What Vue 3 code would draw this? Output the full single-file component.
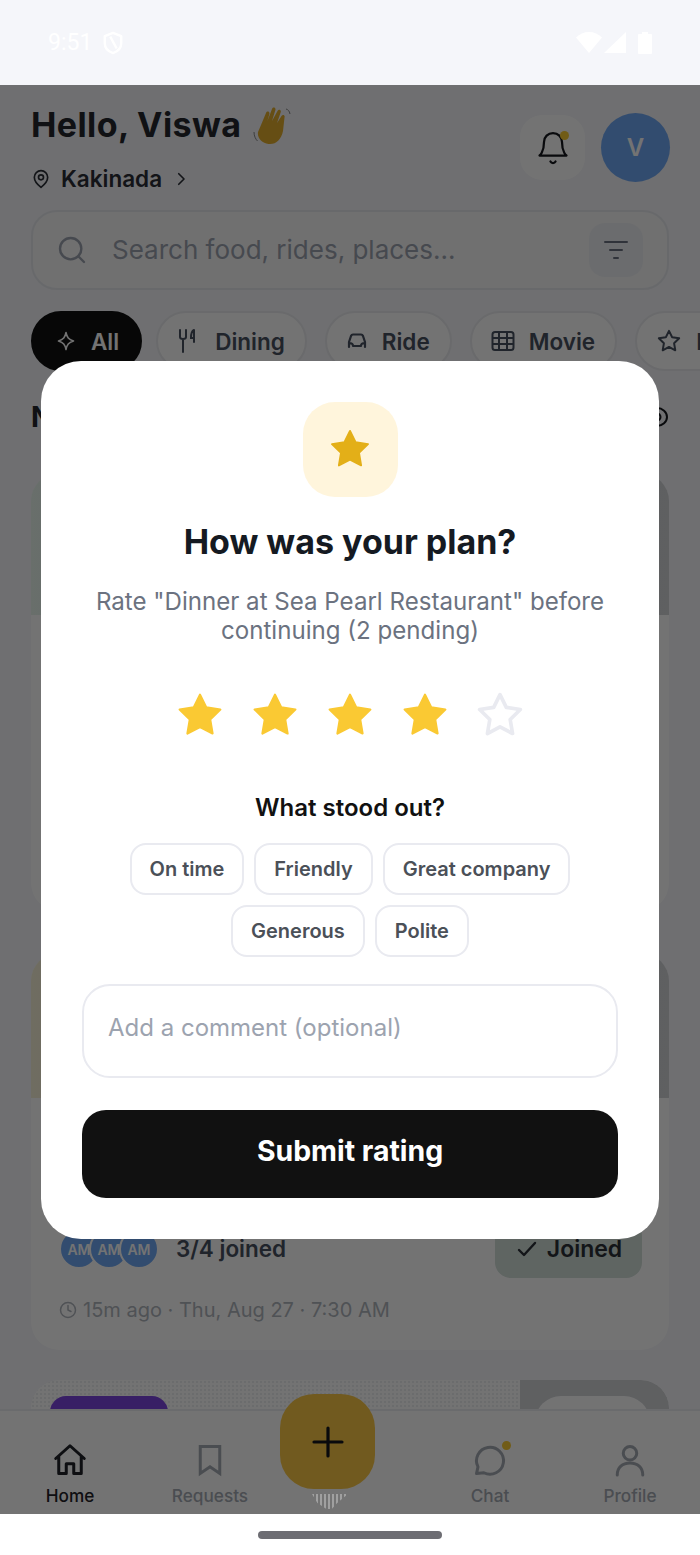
<script setup>
const star = 'M12 2.6l2.9 5.9 6.5.95-4.7 4.6 1.1 6.5L12 17.5l-5.8 3.05 1.1-6.5-4.7-4.6 6.5-.95z'
const chips = [
  { key: 'all', label: 'All', active: true },
  { key: 'dining', label: 'Dining' },
  { key: 'ride', label: 'Ride' },
  { key: 'movie', label: 'Movie' },
  { key: 'event', label: 'Events' }
]
const ratings = [true, true, true, true, false]
const tags = ['On time', 'Friendly', 'Great company', 'Generous', 'Polite']
</script>

<template>
  <div class="page">
    <div class="status">
      <div class="status-left">
        <span class="clock">9:51</span>
        <svg class="shield" viewBox="0 0 24 26" fill="none" stroke="#fff" stroke-width="2.6" stroke-linejoin="round">
          <path d="M12 2 3 5.5V13c0 5.5 3.8 9.3 9 11 5.200-1.700 9-5.500 9-11V5.500z" />
          <path d="M9 6l7 13" />
        </svg>
      </div>
      <div class="status-right">
        <svg width="26" height="21" viewBox="0 0 26 21" fill="#fff"><path d="M0 5.500C3.500 2 8 0 13 0s9.500 2 13 5.500L13 21z" /></svg>
        <svg width="22" height="21" viewBox="0 0 22 21" fill="#fff"><path d="M22 0v21H0z" /></svg>
        <svg class="battery" width="14" height="22" viewBox="0 0 14 22" fill="#fff"><path d="M4 0h6v2h3a1 1 0 0 1 1 1v18a1 1 0 0 1-1 1H1a1 1 0 0 1-1-1V3a1 1 0 0 1 1-1h3z" /></svg>
      </div>
    </div>

    <div class="screen">
      <div class="scroller">
        <header class="head">
          <div>
            <div class="hello">
              <h1>Hello, Viswa</h1>
              <svg class="wave" viewBox="0 0 38 38">
                <path fill="#e2ad2e" d="M8 18 13 6c1-2.400 4-1.400 3.400 1l-2 7 4.600-12c1-2.400 4-1.400 3.400 1L19 14l5.500-10c1.200-2.200 4-1 3.200 1.300L24 16l4.500-7c1.300-2 3.800-.8 3 1.400L30 24c-1.500 8.500-7.500 14-14.500 13C9 36 4 31 5 25z" />
                <path fill="none" stroke="#8a8a8a" stroke-width="1" d="M1 25c0 4 1.500 7 3.500 9M33 2c2 .5 3.500 2 4 5" />
              </svg>
            </div>
            <div class="place">
              <svg width="20" height="20" viewBox="0 0 24 24" fill="none" stroke="currentColor" stroke-width="2" stroke-linecap="round" stroke-linejoin="round"><path d="M20 10c0 6-8 12-8 12s-8-6-8-12a8 8 0 0 1 16 0Z" /><circle cx="12" cy="10" r="3" /></svg>
              <span>Kakinada</span>
              <svg class="chev" width="18" height="18" viewBox="0 0 24 24" fill="none" stroke="currentColor" stroke-width="2.200" stroke-linecap="round" stroke-linejoin="round"><path d="m9 5 7 7-7 7" /></svg>
            </div>
          </div>
          <div class="head-actions">
            <div class="bell">
              <svg width="36" height="36" viewBox="0 0 24 24" fill="none" stroke="#16181d" stroke-width="1.500" stroke-linecap="round" stroke-linejoin="round"><path d="M6 8a6 6 0 0 1 12 0c0 7 3 9 3 9H3s3-2 3-9" /><path d="M10.300 21a1.940 1.940 0 0 0 3.400 0" /></svg>
              <span class="dot bell-dot"></span>
            </div>
            <div class="avatar">V</div>
          </div>
        </header>

        <div class="search">
          <svg width="32" height="32" viewBox="0 0 24 24" fill="none" stroke="#9ca3af" stroke-width="1.800" stroke-linecap="round"><circle cx="11" cy="11" r="8" /><path d="m21 21-4.300-4.300" /></svg>
          <span class="search-text">Search food, rides, places...</span>
          <div class="filter">
            <svg width="28" height="28" viewBox="0 0 28 28" fill="none" stroke="#6b7280" stroke-width="2" stroke-linecap="round"><path d="M3 6h22M8 14h12M12 22h4" /></svg>
          </div>
        </div>

        <div class="chips">
          <div v-for="c in chips" :key="c.key" class="chip" :class="{ on: c.active }">
            <svg v-if="c.key === 'all'" width="20" height="20" viewBox="0 0 20 20" fill="none" stroke="currentColor" stroke-width="1.600" stroke-linejoin="round"><path d="M10 1.500c1 5 2.500 7 7.500 8.500-5 1.500-6.500 3.500-7.500 8.500-1-5-2.500-7-7.500-8.500 5-1.500 6.500-3.500 7.500-8.500z" /></svg>
            <svg v-else-if="c.key === 'dining'" width="24" height="26" viewBox="0 0 24 26" fill="none" stroke="currentColor" stroke-width="2" stroke-linecap="round"><path d="M3 2v7c0 1.500 1 2 3 2s3-.5 3-2V2M6 11v13M17 2v12M17 2c-2.500 1-3 4-3 8h3" /></svg>
            <svg v-else-if="c.key === 'ride'" width="22" height="20" viewBox="0 0 22 20" fill="none" stroke="currentColor" stroke-width="2.200" stroke-linecap="round" stroke-linejoin="round"><path d="M3 15V11l2-6c.4-1 1-1.500 2-1.500h8c1 0 1.600.5 2 1.500l2 6v4M3 12c2 0 4 1 4 3h8c0-2 2-3 4-3M3 15v1M19 15v1" /></svg>
            <svg v-else-if="c.key === 'movie'" width="24" height="22" viewBox="0 0 24 22" fill="none" stroke="currentColor" stroke-width="2" stroke-linejoin="round"><rect x="1.500" y="2" width="21" height="18" rx="2.500" /><path d="M8 2v18M16 2v18M1.500 8h21M1.500 14h21" /></svg>
            <svg v-else width="26" height="26" viewBox="0 0 24 24" fill="none" stroke="currentColor" stroke-width="1.800" stroke-linejoin="round"><path :d="star" /></svg>
            <span class="chip-label">{{ c.label }}</span>
          </div>
        </div>

        <div class="section">
          <h2>Nearby plans</h2>
          <svg width="24" height="24" viewBox="0 0 24 24" fill="none" stroke="#16181d" stroke-width="2"><ellipse cx="12" cy="12" rx="10" ry="9" /><circle cx="12" cy="12" r="3.500" /></svg>
        </div>

        <article class="card first">
          <div class="banner green"></div>
          <div class="card-body"></div>
        </article>

        <article class="card second">
          <div class="banner sand"></div>
          <div class="card-body">
            <div class="join-row">
              <div class="people">
                <span class="am">AM</span><span class="am">AM</span><span class="am">AM</span>
              </div>
              <span class="joined-count">3/4 joined</span>
              <div class="joined">
                <svg width="24" height="24" viewBox="0 0 24 24" fill="none" stroke="#2a2f37" stroke-width="2.400" stroke-linecap="round" stroke-linejoin="round"><path d="M4 13l5 5L20 6" /></svg>
                <span>Joined</span>
              </div>
            </div>
            <div class="when">
              <svg width="18" height="18" viewBox="0 0 24 24" fill="none" stroke="currentColor" stroke-width="2" stroke-linecap="round" stroke-linejoin="round"><circle cx="12" cy="12" r="10" /><path d="M12 6v6l4 2" /></svg>
              <span>15m ago · Thu, Aug 27 · 7:30 AM</span>
            </div>
          </div>
        </article>

        <article class="card third">
          <div class="banner dotted">
            <span class="badge"></span>
            <div class="frame"><span class="frame-pill"></span></div>
          </div>
        </article>
      </div>

      <nav class="nav">
        <div class="tab current">
          <svg width="40" height="38" viewBox="0 0 24 24" fill="none" stroke="currentColor" stroke-width="2" stroke-linecap="round" stroke-linejoin="round"><path d="M2.500 11 12 2.500 21.500 11M4.500 9.500V21h5v-6.500h5V21h5V9.500" /></svg>
          <span>Home</span>
        </div>
        <div class="tab">
          <svg width="38" height="38" viewBox="0 0 24 24" fill="none" stroke="currentColor" stroke-width="2" stroke-linejoin="miter"><path d="M5.500 3h13v18L12 16.500 5.500 21z" /></svg>
          <span>Requests</span>
        </div>
        <div class="fab-slot"></div>
        <div class="tab">
          <svg width="38" height="38" viewBox="0 0 24 24" fill="none" stroke="currentColor" stroke-width="2" stroke-linecap="round" stroke-linejoin="round"><path d="M7.900 20.500A9 9 0 1 0 4 16.600L3 21z" /></svg>
          <span class="dot chat-dot"></span>
          <span>Chat</span>
        </div>
        <div class="tab">
          <svg width="38" height="38" viewBox="0 0 24 24" fill="none" stroke="currentColor" stroke-width="2" stroke-linecap="round"><circle cx="12" cy="7.500" r="4.500" /><path d="M3.500 22c0-5 3.500-8 8.500-8s8.500 3 8.500 8" /></svg>
          <span>Profile</span>
        </div>
      </nav>

      <div class="fab">
        <svg width="36" height="36" viewBox="0 0 36 36" fill="none" stroke="#16181d" stroke-width="3.200" stroke-linecap="round"><path d="M18 4v28M4 18h28" /></svg>
      </div>

      <div class="overlay">
        <section class="modal">
          <div class="modal-icon">
            <svg width="46" height="46" viewBox="0 0 24 24" fill="#e3af18" stroke="#e3af18" stroke-width="1" stroke-linejoin="round"><path :d="star" /></svg>
          </div>
          <h3 class="title">How was your plan?</h3>
          <p class="sub">Rate "Dinner at Sea Pearl Restaurant" before<br />continuing (2 pending)</p>
          <div class="rating">
            <svg v-for="(full, i) in ratings" :key="i" width="52" height="52" viewBox="0 0 24 24" :fill="full ? '#fac933' : 'none'" :stroke="full ? '#fac933' : '#e9eaf0'" :stroke-width="full ? 1 : 1.700" stroke-linejoin="round"><path :d="star" /></svg>
          </div>
          <div class="stood">What stood out?</div>
          <div class="tags">
            <span v-for="t in tags" :key="t" class="tag">{{ t }}</span>
          </div>
          <div class="comment">Add a comment (optional)</div>
          <button class="submit" type="button">Submit rating</button>
        </section>
        <span class="ghost"></span>
      </div>
    </div>

    <div class="gesture"><span class="pill"></span></div>
  </div>
</template>

<style>
html, body { margin: 0; padding: 0; }
</style>

<style scoped>
* { box-sizing: border-box; }
.page {
  width: 700px; height: 1555px; display: flex; flex-direction: column;
  overflow: hidden; background: #fff; font-family: Inter, "Liberation Sans", sans-serif;
}
h1, h2, h3, p { margin: 0; }
.status {
  height: 85px; flex: none; background: #f5f6fa; display: flex; align-items: center;
  justify-content: space-between; padding: 0 48px;
}
.status-left { display: flex; align-items: center; gap: 10px; }
.clock { font: 400 23px/1 Roboto, sans-serif; color: #fff; }
.shield { width: 22px; height: 24px; }
.status-right { display: flex; align-items: center; gap: 2px; }
.battery { margin-left: 10px; }

.screen { flex: 1; position: relative; display: flex; flex-direction: column; min-height: 0; background: #f5f6fa; }
.scroller { flex: 1; min-height: 0; overflow: hidden; padding: 18px 31px 0; }

.head { display: flex; justify-content: space-between; align-items: flex-start; }
.hello { display: flex; align-items: center; gap: 12px; height: 44px; }
h1 { font: 700 34px/44px Inter, sans-serif; color: #24272e; letter-spacing: .4px; white-space: nowrap; }
.wave { width: 38px; height: 38px; margin-top: 1px; }
.place { display: flex; align-items: center; gap: 10px; margin-top: 16px; height: 32px; color: #2a2e36; font: 600 22.500px/32px Inter, sans-serif; }
.head-actions { display: flex; align-items: center; gap: 16px; margin: 10px -1px 0 0; }
.bell { width: 65px; height: 65px; border-radius: 22px; background: #fff; display: flex; align-items: center; justify-content: center; position: relative; }
.dot { position: absolute; width: 9px; height: 9px; border-radius: 50%; background: #facc33; }
.bell-dot { top: 16px; left: 40px; }
.avatar { width: 69px; height: 69px; border-radius: 50%; background: #6fa8f5; color: #fff; display: flex; align-items: center; justify-content: center; font: 600 24px Inter, sans-serif; }

.search {
  margin-top: 15px; height: 80px; border-radius: 26px; border: 2px solid #e7e9ee; background: #f8f8f9;
  display: flex; align-items: center; padding: 0 24px 0 23px;
}
.search-text { margin-left: 24px; flex: 1; font: 400 26px/1 Inter, sans-serif; color: #9ca3af; }
.filter { width: 54px; height: 54px; border-radius: 16px; background: #eef0f3; display: flex; align-items: center; justify-content: center; }

.chips { display: flex; gap: 18px; margin-top: 21px; width: 700px; }
.chip {
  flex: none; height: 60px; border-radius: 30px; border: 2px solid #eaecef; background: #fff; color: #475060;
  display: flex; align-items: center; gap: 14px; padding: 0 20px 0 19px; font: 600 22.500px/1 Inter, sans-serif;
}
.chip-label { padding-top: 2px; }
.chip.on { background: #111; border-color: #111; color: #fff; margin-right: -4px; padding: 0 21px 0 23px; gap: 15px; }

.section { display: flex; justify-content: space-between; align-items: center; margin-top: 27px; height: 38px; }
h2 { font: 700 28px/38px Inter, sans-serif; color: #24272e; }

.card { background: #fff; border-radius: 28px; overflow: hidden; }
.first { margin-top: 37px; height: 438px; }
.second { margin-top: 42px; height: 397px; }
.third { margin-top: 30px; height: 300px; }
.banner { height: 145px; }
.first .banner { height: 142px; }
.green { background: linear-gradient(90deg, #e8f5ee, #c9cbd0 60%, #d2d4d8); }
.sand { background: linear-gradient(90deg, #f7f1d8, #c9cbd0 60%, #d2d4d8); }
.card-body { padding: 122px 28px 0; }
.join-row { display: flex; align-items: center; }
.people { display: flex; }
.am {
  width: 40px; height: 40px; border-radius: 50%; background: #6fa8f5; border: 2px solid #fff; color: #fff;
  display: flex; align-items: center; justify-content: center; font: 600 14px Inter, sans-serif; margin-left: -10px;
}
.am:first-child { margin-left: 0; }
.joined-count { margin-left: 17px; flex: 1; font: 600 22.500px/1 Inter, sans-serif; color: #475060; }
.joined { width: 147px; height: 58px; margin-right: -1px; border-radius: 16px; background: #d2dfd9; color: #2a2f37; display: flex; align-items: center; justify-content: center; gap: 8px; font: 600 23px/1 Inter, sans-serif; }
.when { display: flex; align-items: center; gap: 6px; margin-top: 18px; height: 28px; color: #b0b5bd; font: 400 20px/28px Inter, sans-serif; }

.dotted { position: relative; height: 300px; background-image: radial-gradient(#eeeff1 1px, transparent 1.200px); background-size: 4px 4px; }
.badge { position: absolute; left: 19px; top: 16px; width: 118px; height: 60px; border-radius: 16px; background: #7d46e0; }
.frame { position: absolute; right: 0; top: 0; width: 149px; height: 100%; background: #d2d4d8; border-top-right-radius: 28px; }
.frame-pill { position: absolute; left: 15px; right: 19px; top: 16px; height: 60px; border-radius: 26px; background: #fff; }

.nav {
  flex: none; height: 105px; background: #fff; border-top: 2px solid #eceef1; display: grid;
  grid-template-columns: repeat(5, 140px); position: relative;
}
.tab { position: relative; display: flex; flex-direction: column; align-items: center; color: #a5aab3; padding-top: 31px; font: 500 17.200px/20px Inter, sans-serif; }
.tab svg { height: 36px; }
.tab span:last-child { margin-top: 8px; }
.tab.current { color: #1f2228; }
.tab .chat-dot { top: 30px; left: 82px; margin: 0; }
.fab { position: absolute; left: 280px; bottom: 25px; width: 95px; height: 95px; border-radius: 34px; background: #fac846; display: flex; align-items: center; justify-content: center; }

.overlay { position: absolute; inset: 0; background: rgba(0, 0, 0, .55); display: flex; align-items: center; justify-content: center; }
.modal {
  width: 618px; background: #fff; border-radius: 40px; padding: 41px; display: flex; flex-direction: column; align-items: center;
}
.modal-icon { width: 95px; height: 95px; border-radius: 32px; background: #fff5dc; display: flex; align-items: center; justify-content: center; }
.title { margin-top: 21px; font: 700 34px/48px Inter, sans-serif; color: #151a22; }
.sub { margin-top: 21px; text-align: center; font: 400 24.100px/29px Inter, sans-serif; color: #6b7280; }
.rating { display: flex; gap: 23px; margin-top: 44px; }
.stood { margin-top: 52px; font: 600 24px/30px Inter, sans-serif; color: #111; }
.tags { margin-top: 20px; display: flex; flex-wrap: wrap; justify-content: center; gap: 10px; width: 480px; }
.tag { height: 52px; padding: 0 18px; border: 2.500px solid #e9eaf0; border-radius: 16px; color: #4b5058; font: 600 20px/49px Inter, sans-serif; }
.comment { margin-top: 27px; width: 100%; height: 94px; border: 2.500px solid #e9eaf0; border-radius: 28px; padding: 26px 24px 0; color: #9ca3af; font: 400 24px/32px Inter, sans-serif; }
.submit { margin-top: 32px; width: 100%; height: 88px; border: 0; border-radius: 24px; padding: 0 0 4px; background: #111; color: #fff; font: 700 28.400px/1 Inter, sans-serif; }
.ghost { position: absolute; left: 312px; bottom: 5px; width: 36px; height: 15px; background: repeating-linear-gradient(90deg, #a0a0a0 0 2px, transparent 2px 4px); clip-path: polygon(0 0, 100% 0, 70% 60%, 55% 100%, 40% 100%, 15% 60%); }

.gesture { height: 41px; flex: none; display: flex; justify-content: center; padding-top: 17px; background: #fff; }
.pill { width: 184px; height: 8px; border-radius: 4px; background: #6d6d73; }
</style>
